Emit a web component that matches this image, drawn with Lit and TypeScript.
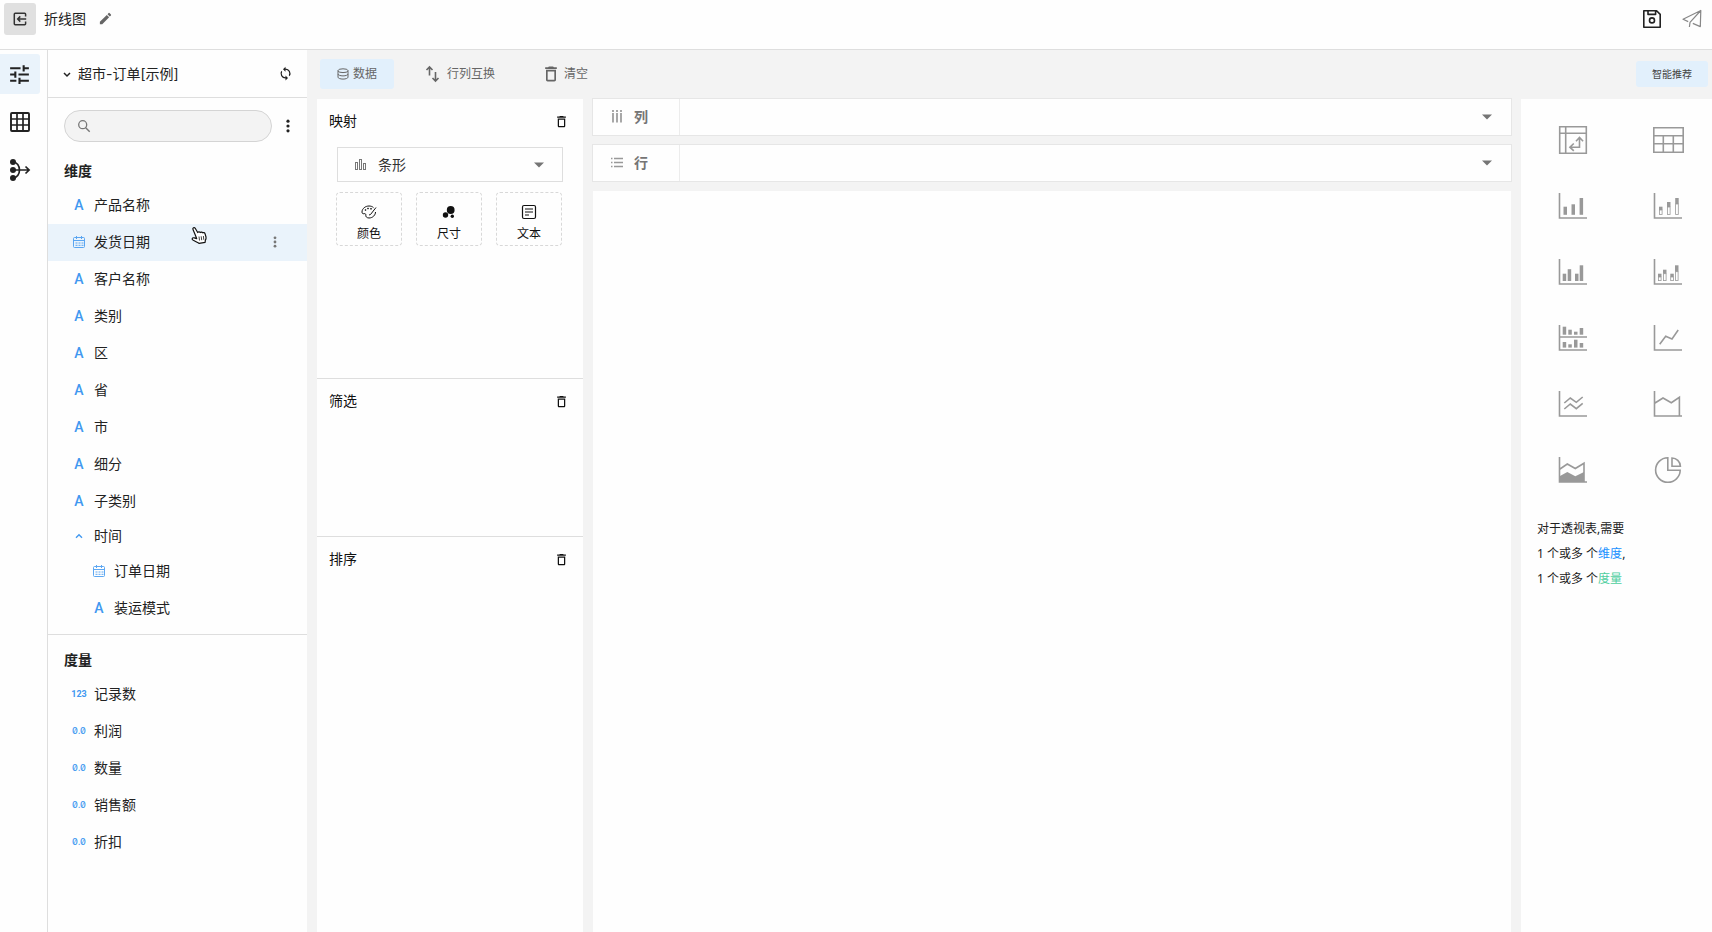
import { LitElement, html, svg, css, nothing } from "lit";
import { customElement, property, state } from "lit/decorators.js";

type Kind = "text" | "date" | "group" | "int" | "float";
interface Field {
  name: string;
  kind: Kind;
  nested?: boolean;
}

const DIMENSIONS: Field[] = [
  { name: "产品名称", kind: "text" },
  { name: "发货日期", kind: "date" },
  { name: "客户名称", kind: "text" },
  { name: "类别", kind: "text" },
  { name: "区", kind: "text" },
  { name: "省", kind: "text" },
  { name: "市", kind: "text" },
  { name: "细分", kind: "text" },
  { name: "子类别", kind: "text" },
  { name: "时间", kind: "group" },
  { name: "订单日期", kind: "date", nested: true },
  { name: "装运模式", kind: "text", nested: true },
];

const MEASURES: Field[] = [
  { name: "记录数", kind: "int" },
  { name: "利润", kind: "float" },
  { name: "数量", kind: "float" },
  { name: "销售额", kind: "float" },
  { name: "折扣", kind: "float" },
];

const icon = (size: number, box: number, body: unknown) => html`
  <svg width=${size} height=${size} viewBox="0 0 ${box} ${box}" fill="none" stroke="none" aria-hidden="true">${body}</svg>
`;

const solid = (d: string) => svg`<path fill="currentColor" d=${d}></path>`;
const line = (d: string, w = 1.6) => svg`<path stroke="currentColor" stroke-width=${w} d=${d}></path>`;

const trash = (size: number) =>
  icon(size, 24, solid("M6 19c0 1.1.9 2 2 2h8c1.1 0 2-.9 2-2V7H6zM8 9h8v10H8zM15.500 4l-1-1h-5l-1 1H5v2h14V4z"));
const dots = (size: number) =>
  icon(size, 16, svg`<g fill="currentColor"><circle cx="8" cy="3.2" r="1.6"/><circle cx="8" cy="8" r="1.6"/><circle cx="8" cy="12.8" r="1.6"/></g>`);
const caret = html`<svg width="10" height="6" viewBox="0 0 10 6" aria-hidden="true"><path fill="#757575" d="M0 .5h10L5 5.5z"/></svg>`;
const calendar = icon(14, 14, svg`
  <g stroke="currentColor" opacity=".85">
    <rect x="1.500" y="2.500" width="11" height="10" rx="1"/>
    <path d="M1.500 5.500h11M4.500 1v3M9.500 1v3"/>
    <path stroke-dasharray="2 1" d="M3.500 8h8M3.500 10.300h8"/>
  </g>`);

/* Chart glyphs share one 32px box with the axes at its left and bottom edge. */
const AXIS = "M2.5 3V28H30";
const bars = (list: number[][]) =>
  list.map(([x, top, bottom]) => svg`<rect fill="currentColor" x=${x} y=${top} width="3.5" height=${bottom - top}/>`);
const stacks = (list: number[][]) =>
  list.map(([x, top, split, bottom]) => svg`
    <rect fill="currentColor" x=${x} y=${top} width="3.5" height=${split - top}/>
    <rect stroke="currentColor" stroke-width=".8" x=${x + 0.4} y=${split} width="2.7" height=${bottom - split - 0.4}/>`);

const CHARTS: { label: string; body: unknown }[] = [
  { label: "透视表", body: line("M2.7 2.7h26.6v26.6H2.7zM2.7 9.2h26.6M8.7 2.7v26.6M22.5 14v9.2h-9M19 17.2l3.5-3.7 3.6 3.7M16.8 19.5l-3.9 3.7 3.9 3.7") },
  { label: "表格", body: line("M1.8 3.7h29.4v24.6H1.8zM1.8 11.7h29.4M1.8 19.7h29.4M11.3 11.7v16.6M21.3 11.7v16.6") },
  { label: "柱状图", body: [line(AXIS), bars([[6.5, 16.7, 24.8], [14.5, 14.3, 24.8], [22.6, 8, 24.8]])] },
  { label: "堆积柱状图", body: [line(AXIS), stacks([[7, 16.7, 20, 24.8], [15, 12, 17, 24.8], [23.2, 8, 14, 24.8]])] },
  { label: "并列柱状图", body: [line(AXIS), bars([[5.7, 17.7, 25], [10.7, 13.2, 25], [18, 17.7, 25], [22.7, 9.3, 25]])] },
  { label: "并列堆积柱状图", body: [line(AXIS), stacks([[6, 17.7, 21, 25], [11, 13.7, 17.7, 25], [18.3, 17.7, 21, 25], [23, 9.3, 15.7, 25]])] },
  { label: "多图", body: [line(AXIS + "M2.5 15H30"), bars([[5.7, 4.7, 12.7], [11.3, 7.7, 12.7], [17, 9.7, 12.7], [22.7, 6, 12.7], [5.7, 20, 25.6], [11.3, 22.3, 25.6], [17, 17.7, 25.6], [22.7, 21, 25.6]])] },
  { label: "折线图", body: line(AXIS + "M7.7 22.3L13.7 14.3L20 17L26.2 8") },
  { label: "多折线图", body: line(AXIS + "M7.3 15L13.3 10L19.3 14.3L25.7 9M7.3 21L13.3 16L19.3 20.7L25.7 15.3") },
  { label: "面积图", body: line(AXIS + "M3 15L11 10L19.3 14.7L27.4 9.3V28") },
  { label: "堆积面积图", body: [line(AXIS + "M3 15L10.3 10L18.3 14.5L27 9.2V28"), solid("M3 22L10.3 18L18.3 22.3L27 18V28H3z")] },
  { label: "饼图", body: line("M15.8 3.7A12.3 12.3 0 1 0 28.2 16.3H15.8zM20 4a8.6 8.6 0 0 1 8.4 8.2H20z") },
];

const shared = css`
  * {
    box-sizing: border-box;
  }
  button {
    display: flex;
    align-items: center;
    justify-content: center;
    margin: 0;
    padding: 0;
    border: 0;
    background: none;
    color: inherit;
    font: inherit;
    cursor: pointer;
  }
  svg {
    display: block;
    flex: none;
  }
  h2,
  ul,
  p {
    margin: 0;
    padding: 0;
    list-style: none;
  }
`;

@customElement("field-row")
export class FieldRow extends LitElement {
  @property({ attribute: false }) field!: Field;
  @property({ type: Boolean }) active = false;

  static styles = [
    shared,
    css`
      :host {
        display: block;
      }
      .row {
        display: flex;
        align-items: center;
        height: 37px;
        padding: 0 24px 1px;
      }
      .group {
        height: 33px;
      }
      .nested {
        padding-left: 44px;
      }
      .active {
        background: #eaf3fb;
      }
      .name {
        flex: 1;
        justify-content: flex-start;
        gap: 8px;
        white-space: nowrap;
      }
      .kind {
        display: flex;
        justify-content: center;
        width: 14px;
        color: #4198f0;
        line-height: 14px;
        white-space: nowrap;
      }
      .kind-text {
        font: 500 14px/14px Roboto, sans-serif;
      }
      .kind-int {
        font: 700 9px/14px Roboto, sans-serif;
      }
      .kind-float {
        font: 500 9px/14px Inter, sans-serif;
        font-feature-settings: "zero" 1;
      }
      .more {
        width: 16px;
        height: 16px;
        color: #777;
      }
    `,
  ];

  private mark() {
    switch (this.field.kind) {
      case "text":
        return "A";
      case "int":
        return "123";
      case "float":
        return "0.0";
      case "date":
        return calendar;
      default:
        return icon(14, 14, line("M4 8.7l3-3 3 3", 1.4));
    }
  }

  render() {
    const { name, kind, nested } = this.field;
    return html`
      <div class="row ${kind === "group" ? "group" : ""} ${nested ? "nested" : ""} ${this.active ? "active" : ""}">
        <button class="name"><span class="kind kind-${kind}">${this.mark()}</span>${name}</button>
        ${this.active ? html`<button class="more" aria-label="更多">${dots(14)}</button>` : nothing}
      </div>
    `;
  }
}

@customElement("app-root")
export class AppRoot extends LitElement {
  @state() private selected = "发货日期";

  static styles = [
    shared,
    css`
      :host {
        display: flex;
        flex-direction: column;
        min-height: 100vh;
        background: #fefefe;
        color: #222;
        font: 14px/20px "Noto Sans", "Noto Sans CJK SC", sans-serif;
      }
      .topbar {
        display: flex;
        align-items: center;
        height: 50px;
        padding: 0 10px 12px 4px;
        border-bottom: 1px solid #dedede;
      }
      .back {
        width: 32px;
        height: 32px;
        margin-right: 8px;
        border-radius: 3px;
        background: #e0e0e0;
      }
      .rename {
        margin-left: 12px;
        color: #666;
      }
      .save {
        margin: 0 20px 0 auto;
      }
      .send {
        color: #888;
      }
      .body {
        display: flex;
        flex: 1;
      }
      .rail {
        display: flex;
        flex: none;
        flex-direction: column;
        gap: 8px;
        width: 48px;
        padding-top: 4px;
        border-right: 1px solid #dedede;
      }
      .rail-item {
        width: 40px;
        height: 40px;
        padding-right: 1px;
        border-radius: 0 3px 3px 0;
      }
      .rail-active {
        background: #eaf3fb;
      }
      .fields {
        flex: none;
        width: 259px;
      }
      .source {
        display: flex;
        align-items: center;
        height: 48px;
        padding: 0 14px 0 12px;
        border-bottom: 1px solid #dedede;
      }
      .source-name {
        gap: 4px;
        margin-right: auto;
        font-family: Inter, "Noto Sans CJK SC", sans-serif;
      }
      .search-line {
        display: flex;
        align-items: center;
        gap: 8px;
        padding: 12px 11px 0 16px;
      }
      .search {
        display: flex;
        flex: 1;
        align-items: center;
        gap: 8px;
        min-width: 0;
        height: 32px;
        padding: 0 12px;
        border: 1px solid #d4d4d4;
        border-radius: 16px;
        background: #f3f3f3;
        color: #777;
      }
      .search-input {
        flex: 1;
        min-width: 0;
        border: 0;
        outline: 0;
        background: none;
        font: inherit;
      }
      .fields-title {
        padding: 0 16px;
        font-size: 14px;
        font-weight: 600;
        line-height: 20px;
      }
      .dimensions {
        padding: 19px 0 7px;
        border-bottom: 1px solid #dedede;
      }
      .measures {
        padding-top: 15px;
      }
      .list {
        padding-top: 6px;
      }
      .work {
        display: flex;
        flex: 1;
        flex-direction: column;
        min-width: 0;
        background: #f3f3f3;
      }
      .tools {
        display: flex;
        align-items: center;
        height: 48px;
        padding: 0 4px 0 13px;
        color: #666;
        font-size: 12px;
      }
      .tool {
        gap: 4px;
        height: 30px;
        margin-right: 14px;
        padding: 0 16px;
        border-radius: 3px;
      }
      .tool-on {
        padding: 0 17px;
        background: #e2f0fc;
      }
      .tool-plain {
        gap: 3px;
      }
      .advise {
        height: 26px;
        margin-left: auto;
        padding: 0 16px;
        border-radius: 3px;
        background: #e2f0fc;
        color: #444;
        font-size: 10px;
      }
      .columns {
        display: flex;
        flex: 1;
        gap: 9px;
        padding-left: 10px;
      }
      .config {
        flex: none;
        width: 266px;
        margin-top: 1px;
        background: #fefefe;
      }
      .section {
        padding: 12px 12px 0;
      }
      .section-map {
        height: 280px;
        border-bottom: 1px solid #dedede;
      }
      .section-filter {
        height: 158px;
        border-bottom: 1px solid #dedede;
      }
      .section-head {
        display: flex;
        align-items: center;
        justify-content: space-between;
        padding-right: 2px;
        color: #111;
      }
      .section-title {
        font-size: 14px;
        font-weight: 400;
      }
      .pick {
        display: grid;
        align-items: center;
        margin: 16px 8px 10px;
      }
      .pick > * {
        grid-area: 1 / 1;
      }
      .pick-icon {
        margin-left: 16px;
        color: #777;
        pointer-events: none;
      }
      .pick-caret {
        justify-self: end;
        margin-right: 19px;
        pointer-events: none;
      }
      .pick-select {
        width: 100%;
        height: 35px;
        padding: 0 40px;
        border: 1px solid #dedede;
        border-radius: 0;
        appearance: none;
        background: none;
        color: #333;
        font: inherit;
      }
      .tiles {
        display: grid;
        grid-template-columns: repeat(3, 1fr);
        gap: 14px;
        padding: 0 9px 0 7px;
      }
      .tile {
        flex-direction: column;
        gap: 5px;
        height: 54px;
        padding-top: 8px;
        border: 1px dashed #d8d8d8;
        border-radius: 4px;
        color: #111;
        font-size: 12px;
        line-height: 18px;
      }
      .stage {
        display: flex;
        flex: 1;
        flex-direction: column;
        gap: 8px;
        min-width: 0;
      }
      .shelf {
        display: flex;
        align-items: center;
        height: 38px;
        padding-right: 16px;
        border: 1px solid #e6e6e6;
        background: #fefefe;
      }
      .shelf-name {
        display: flex;
        align-items: center;
        gap: 10px;
        width: 87px;
        height: 100%;
        padding-left: 17px;
        border-right: 1px solid #ececec;
        color: #757575;
        font-weight: 600;
      }
      .shelf-icon {
        color: #999;
      }
      .shelf-open {
        width: 16px;
        height: 16px;
        margin-left: auto;
      }
      .canvas {
        flex: 1;
        margin: 1px 1px 0;
        background: #fefefe;
      }
      .charts {
        flex: none;
        width: 191px;
        margin-top: 1px;
        background: #fefefe;
      }
      .chart-grid {
        display: grid;
        grid-template-columns: 32px 32px;
        justify-content: space-between;
        gap: 34px 0;
        padding: 25px 28px 0 36px;
        color: #999;
      }
      .hint {
        padding: 30px 16px 0;
        color: #222;
        font-size: 12px;
        line-height: 25px;
      }
      .link-dim {
        color: #1890ff;
        text-decoration: none;
      }
      .link-measure {
        color: #4fce9f;
        text-decoration: none;
      }
      .pointer {
        position: absolute;
        top: 226px;
        left: 190px;
        pointer-events: none;
      }
    `,
  ];

  private rows(list: Field[]) {
    return html`<ul class="list">
      ${list.map(
        (f) => html`<li><field-row .field=${f} ?active=${f.name === this.selected} @click=${() => (this.selected = f.name)}></field-row></li>`,
      )}
    </ul>`;
  }

  private shelf(name: string, glyph: unknown) {
    return html`<div class="shelf">
      <span class="shelf-name"><span class="shelf-icon">${glyph}</span>${name}</span>
      <button class="shelf-open" aria-label="展开${name}">${caret}</button>
    </div>`;
  }

  private sectionHead(name: string) {
    return html`<div class="section-head">
      <h2 class="section-title">${name}</h2>
      <button aria-label="清空${name}">${trash(15)}</button>
    </div>`;
  }

  render() {
    return html`
      <header class="topbar">
        <button class="back" aria-label="返回">
          ${icon(14, 14, svg`<path stroke="#333" stroke-width="1.5" d="M12.6 4.6V2.2q0-.9-.9-.9H2.2q-.9 0-.9.9v9.6q0 .9.9.9h9.5q.9 0 .9-.9V9.5M4.8 7h8.4M7.3 4.4L4.7 7l2.6 2.6"/>`)}
        </button>
        <span>折线图</span>
        <button class="rename" aria-label="重命名">${icon(15, 24, solid("M3 17.2V21h3.8L17.8 9.9l-3.7-3.7zM20.7 7a1 1 0 0 0 0-1.4l-2.3-2.3a1 1 0 0 0-1.4 0l-1.8 1.8 3.7 3.7z"))}</button>
        <button class="save" aria-label="保存">
          ${icon(20, 20, svg`<path stroke="#222" stroke-width="1.6" stroke-linejoin="round" d="M1.8 1.8h12.8l3.6 3.6v12.8H1.8zM6 2v3.4h7.6V2"/><circle cx="10" cy="11.4" r="2.5" stroke="#222" stroke-width="1.6"/>`)}
        </button>
        <button class="send" aria-label="发布">
          ${icon(20, 20, svg`<path stroke="currentColor" stroke-width="1.2" stroke-linejoin="round" d="M6.200 12.600L1 10.300 18.800 1.500 18.300 17.600l-7.500-3.200M18.800 1.500L8 13.400l-.6 4.600"/>`)}
        </button>
      </header>
      <div class="body">
        <nav class="rail">
          <button class="rail-item rail-active" aria-label="配置">
            ${icon(25, 24, solid("M3 17v2h6v-2zM3 5v2h10V5zm10 16v-2h8v-2h-8v-2h-2v6zM7 9v2H3v2h4v2h2V9zm14 4v-2H11v2zm-6-4h2V7h4V5h-4V3h-2z"))}
          </button>
          <button class="rail-item" aria-label="表格">
            ${icon(20, 20, svg`<rect x="1" y="1" width="18" height="18" rx="1" stroke="#222" stroke-width="1.9"/><path stroke="#222" stroke-width="1.7" d="M7 1v18M13 1v18M1 7h18M1 13h18"/>`)}
          </button>
          <button class="rail-item" aria-label="关系">
            ${icon(22, 22, svg`<g fill="#222"><circle cx="4" cy="3" r="3"/><circle cx="4" cy="11" r="3"/><circle cx="4" cy="19" r="3"/></g><path stroke="#222" stroke-width="1.7" d="M4 3c4 0 6.500 4 6.500 8s-2.500 8-6.500 8M4 11h16M16.500 7.500l3.600 3.500-3.600 3.500"/>`)}
          </button>
        </nav>
        <aside class="fields">
          <div class="source">
            <button class="source-name">${icon(14, 14, line("M4 6l3 3 3-3", 1.5))}超市-订单[示例]</button>
            <button aria-label="刷新">
              ${icon(15, 24, solid("M12 4V1L8 5l4 4V6a6 6 0 0 1 5.300 8.800l1.460 1.460A8 8 0 0 0 12 4zm0 14a6 6 0 0 1-5.300-8.800L5.240 7.740A8 8 0 0 0 12 20v3l4-4-4-4z"))}
            </button>
          </div>
          <div class="search-line">
            <label class="search">
              ${icon(14, 14, svg`<circle cx="5.700" cy="5.700" r="4" stroke="currentColor" stroke-width="1.300"/><path stroke="currentColor" stroke-width="1.400" d="M8.700 8.700l4 4"/>`)}
              <input class="search-input" type="text" aria-label="搜索字段" />
            </label>
            <button aria-label="更多选项">${dots(16)}</button>
          </div>
          <section class="dimensions">
            <h2 class="fields-title">维度</h2>
            ${this.rows(DIMENSIONS)}
          </section>
          <section class="measures">
            <h2 class="fields-title">度量</h2>
            ${this.rows(MEASURES)}
          </section>
        </aside>
        <main class="work">
          <div class="tools">
            <button class="tool tool-on">
              ${icon(12, 12, svg`<g stroke="currentColor"><ellipse cx="6" cy="2.700" rx="5" ry="1.900"/><path d="M1 2.700v6.500c0 1 2.200 1.900 5 1.900s5-.9 5-1.900V2.700M1 6c0 1 2.200 1.900 5 1.900S11 7 11 6"/></g>`)}数据
            </button>
            <button class="tool tool-plain">
              ${icon(20, 20, svg`<g stroke="currentColor" stroke-width="1.600"><path d="M5.500 11.500V3M2.500 6l3-3 3 3M11.500 8v8.500M8.500 14l3 3 3-3"/></g>`)}行列互换
            </button>
            <button class="tool tool-plain">${trash(20)}清空</button>
            <button class="advise">智能推荐</button>
          </div>
          <div class="columns">
            <div class="config">
              <section class="section section-map">
                ${this.sectionHead("映射")}
                <div class="pick">
                  <select class="pick-select" aria-label="图形类型">
                    <option>条形</option>
                  </select>
                  <span class="pick-icon">
                    ${icon(14, 14, svg`<g stroke="currentColor"><rect x="2.500" y="4.500" width="2" height="7"/><rect x="6.500" y="1.500" width="2" height="10"/><rect x="10.500" y="5.500" width="2" height="6"/></g>`)}
                  </span>
                  <span class="pick-caret">${caret}</span>
                </div>
                <div class="tiles">
                  <button class="tile">
                    ${icon(16, 16, svg`<g stroke="currentColor"><path d="M12.500 3.600C11.300 2.400 9.600 2 8 2 4.500 2 1 4.500 1 8c0 1.400.9 2 2 1.700 1.200-.3 2 .3 1.800 1.500-.2 1.400.8 2.700 3.200 2.800 3.800 0 6.500-3 6.500-6M15 3.500L9.500 10.500 8 11"/><circle cx="4.500" cy="6" r=".5"/><circle cx="7" cy="4.500" r=".5"/><circle cx="10" cy="4.800" r=".5"/></g>`)}颜色
                  </button>
                  <button class="tile">
                    ${icon(16, 16, svg`<g fill="currentColor"><circle cx="9.700" cy="6" r="3.900"/><circle cx="4.500" cy="11" r="2.700"/><circle cx="11.300" cy="12.200" r="1.700"/></g>`)}尺寸
                  </button>
                  <button class="tile">
                    ${icon(16, 16, svg`<g stroke="currentColor" stroke-width="1.200"><rect x="1.500" y="1.500" width="13" height="13" rx="1.500"/><path d="M4 5h8M4 8h8M4 11h4"/></g>`)}文本
                  </button>
                </div>
              </section>
              <section class="section section-filter">${this.sectionHead("筛选")}</section>
              <section class="section">${this.sectionHead("排序")}</section>
            </div>
            <div class="stage">
              ${this.shelf("列", icon(14, 14, svg`<path stroke="currentColor" stroke-width="1.700" d="M3 0v2M7 0v2M11 0v2M3 3v9.500M7 3v9.500M11 3v9.500"/>`))}
              ${this.shelf("行", icon(14, 14, svg`<path stroke="currentColor" stroke-width="1.700" d="M1 2.500h1.500M1 6.500h1.500M1 10.500h1.500M4 2.500h9M4 6.500h9M4 10.500h9"/>`))}
              <div class="canvas"></div>
            </div>
            <aside class="charts">
              <div class="chart-grid">
                ${CHARTS.map((c) => html`<button aria-label=${c.label}>${icon(32, 32, c.body)}</button>`)}
              </div>
              <div class="hint">
                <p>对于透视表,需要</p>
                <p>1 个或多 个<a class="link-dim" href="#dimensions">维度</a>,</p>
                <p>1 个或多 个<a class="link-measure" href="#measures">度量</a></p>
              </div>
            </aside>
          </div>
        </main>
      </div>
      <svg class="pointer" width="18" height="19" viewBox="0 0 18 19" aria-hidden="true">
        <path fill="#fff" stroke="#111" stroke-width="1.200" stroke-linejoin="round" d="M5.500 9.500L3 3.500c-.7-1.700 1.300-2.700 2.200-1.200L7.700 6.500c.7-.9 2-.7 2.500 0 .8-.8 2-.4 2.400.3.900-.6 2.100-.1 2.400.9l1 3.300c.3 1.600-.2 2.700-.7 3.400l-.2 2-6 1C7.500 16.700 5.500 15.300 3.300 14.300c-2-1-1.200-3 1-2.400l2.400.8z"/>
        <path stroke="#111" stroke-width=".8" d="M9 10.500l.5 4M11.200 10.300l.5 3.900M13.400 10l.4 3.800"/>
      </svg>
    `;
  }
}
